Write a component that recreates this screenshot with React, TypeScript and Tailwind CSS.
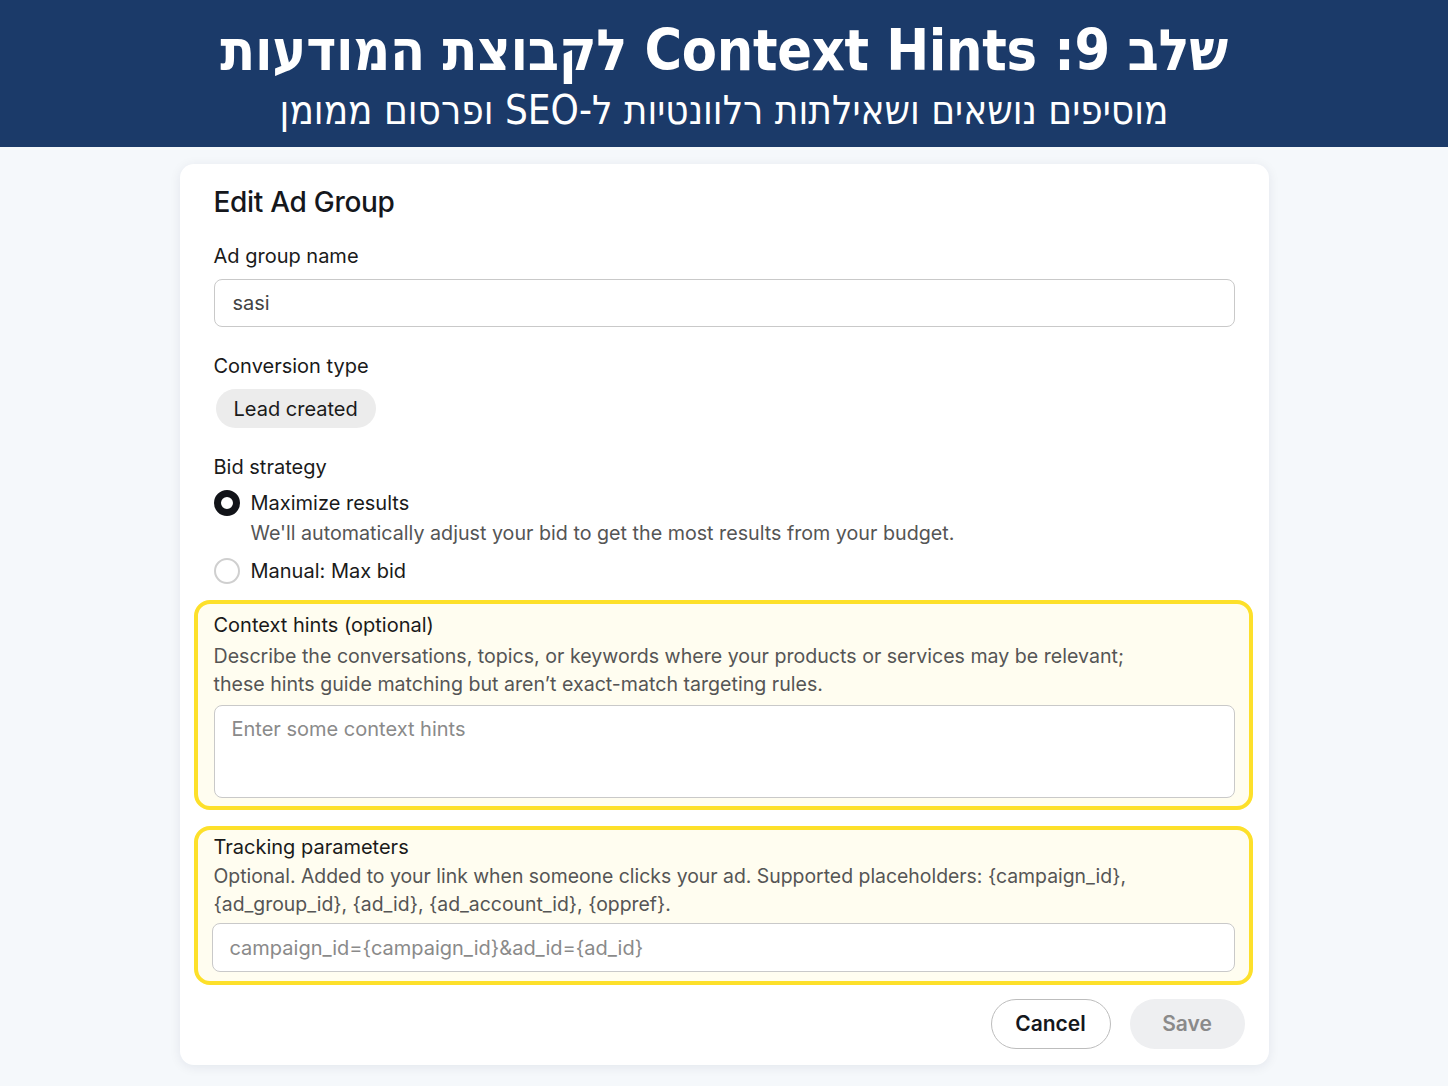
import React, { useState } from "react";

const font = { fontFamily: "Inter, 'Liberation Sans', sans-serif" };
const hebrew = { fontFamily: "'Liberation Sans Narrow', 'DejaVu Sans Condensed', 'Liberation Sans', sans-serif" };

function Radio({ checked, label, onClick }: { checked: boolean; label: string; onClick: () => void }) {
    return (
        <button type="button" onClick={onClick} className="flex items-center gap-[11px] h-7 text-left">
            {checked ? (
                <span className="w-[26px] h-[26px] rounded-full border-[7px] border-[#111318] bg-white shrink-0" />
            ) : (
                <span className="w-[26px] h-[26px] rounded-full border-2 border-[#cfcfcf] bg-white shrink-0" />
            )}
            <span className="text-[20px] leading-7 text-[#1a1a1a]">{label}</span>
        </button>
    );
}

export default function App() {
    const [name, setName] = useState("sasi");
    const [strategy, setStrategy] = useState("max");
    const [hints, setHints] = useState("");
    const [tracking, setTracking] = useState("");

    return (
        <div className="min-h-screen bg-[#f5f8fb] flex flex-col" style={font}>
            <header className="h-[147px] bg-[#1b3a69] flex flex-col items-center text-white" dir="rtl">
                <h1 className="mt-[15px] text-[57px] leading-[70px] font-bold tracking-[-0.3px]" style={hebrew}>
                    שלב 9: Context Hints לקבוצת המודעות
                </h1>
                <p className="mt-[2px] text-[40px] leading-[46px]" style={hebrew}>
                    מוסיפים נושאים ושאילתות רלוונטיות ל-SEO ופרסום ממומן
                </p>
            </header>

            <div className="flex justify-center pt-[17px] pb-5">
                <div className="w-[1089px] bg-white rounded-[14px] shadow-[0_2px_12px_rgba(15,30,60,0.08)] px-[34px] pt-5 pb-4 flex flex-col">
                    <h2 className="text-[28px] leading-9 font-medium text-[#15171c] tracking-[-0.3px]">Edit Ad Group</h2>

                    <label className="mt-[22px] text-[20px] leading-7 text-[#1a1a1a]">Ad group name</label>
                    <input
                        value={name}
                        onChange={(e) => setName(e.target.value)}
                        className="mt-[9px] h-12 w-full rounded-lg border border-[#c9c9c9] px-[18px] text-[20px] text-[#444] outline-none"
                        style={font}
                    />

                    <span className="mt-[25px] text-[20px] leading-7 text-[#1a1a1a]">Conversion type</span>
                    <div className="mt-[9px] ml-[2px]">
                        <span className="inline-flex items-center h-[39px] px-[18px] rounded-full bg-[#ececec] text-[20px] text-[#1a1a1a]">
                            Lead created
                        </span>
                    </div>

                    <span className="mt-[25px] text-[20px] leading-7 text-[#1a1a1a]">Bid strategy</span>
                    <div className="mt-2">
                        <Radio checked={strategy === "max"} label="Maximize results" onClick={() => setStrategy("max")} />
                    </div>
                    <p className="mt-[2px] pl-[37px] text-[19.7px] leading-7 text-[#555]">
                        We'll automatically adjust your bid to get the most results from your budget.
                    </p>
                    <div className="mt-[10px]">
                        <Radio checked={strategy === "manual"} label="Manual: Max bid" onClick={() => setStrategy("manual")} />
                    </div>

                    <div className="mt-[15px] -ml-5 -mr-[18px] border-4 border-[#fde02a] rounded-[16px] bg-[#fffdf0] pl-4 pr-[14px] pt-[7px] pb-2 flex flex-col">
                        <span className="text-[20px] leading-7 text-[#1a1a1a]">Context hints (optional)</span>
                        <p className="mt-[3px] text-[19.6px] leading-7 text-[#555]">
                            Describe the conversations, topics, or keywords where your products or services may be relevant;
                            <br />
                            these hints guide matching but aren’t exact-match targeting rules.
                        </p>
                        <textarea
                            value={hints}
                            onChange={(e) => setHints(e.target.value)}
                            placeholder="Enter some context hints"
                            className="mt-[7px] h-[93px] w-full resize-none rounded-lg border border-[#c9c9c9] bg-white px-[17px] py-[9px] text-[20px] leading-7 text-[#444] placeholder:text-[#8a8a8a] outline-none"
                            style={font}
                        />
                    </div>

                    <div className="mt-4 -ml-5 -mr-[18px] border-4 border-[#fde02a] rounded-[16px] bg-[#fffdf0] pl-4 pr-[14px] pt-[3px] pb-[9px] flex flex-col">
                        <span className="text-[20px] leading-7 text-[#1a1a1a]">Tracking parameters</span>
                        <p className="mt-[1px] text-[19.4px] leading-7 text-[#555]">
                            Optional. Added to your link when someone clicks your ad. Supported placeholders: {"{campaign_id}"},
                            <br />
                            {"{ad_group_id}, {ad_id}, {ad_account_id}, {oppref}."}
                        </p>
                        <input
                            value={tracking}
                            onChange={(e) => setTracking(e.target.value)}
                            placeholder="campaign_id={campaign_id}&ad_id={ad_id}"
                            className="mt-[5px] -ml-[2px] h-[49px] w-[calc(100%+2px)] rounded-lg border border-[#c9c9c9] bg-white px-[17px] text-[20px] text-[#444] placeholder:text-[#8a8a8a] outline-none"
                            style={font}
                        />
                    </div>

                    <div className="mt-[14px] flex justify-end gap-[19px] -mr-[10px]">
                        <button
                            type="button"
                            className="h-[50px] w-[120px] rounded-full border border-[#bdbdbd] bg-white text-[21px] font-semibold text-[#15171c]"
                        >
                            Cancel
                        </button>
                        <button
                            type="button"
                            disabled
                            className="h-[50px] w-[115px] rounded-full bg-[#eeeff1] text-[21px] font-semibold text-[#8a8a8a]"
                        >
                            Save
                        </button>
                    </div>
                </div>
            </div>
        </div>
    );
}
